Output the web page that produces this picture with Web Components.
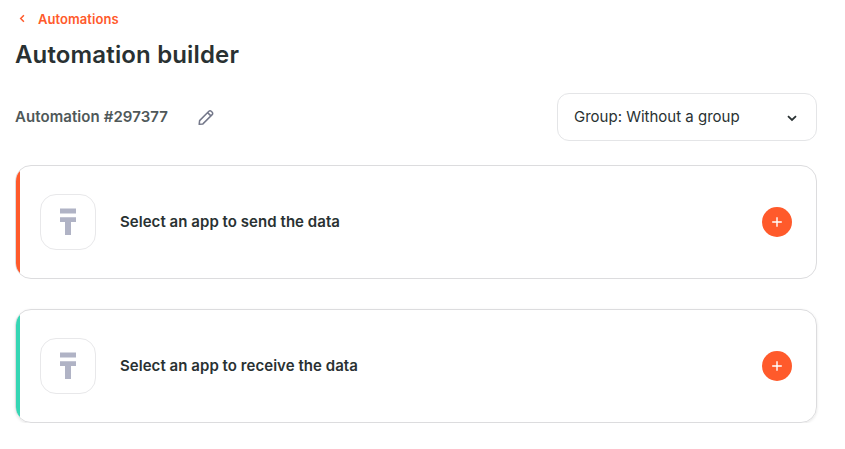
<!DOCTYPE html>
<html lang="en">
<head>
<meta charset="utf-8">
<title>Automation builder</title>
<style>
    body {
        margin: 0;
        background: #fff;
        color: #293132;
        font-family: Inter, "Liberation Sans", sans-serif;
        font-size: 15px;
    }
</style>
</head>
<body>
<automation-page>
    <back-link slot="back">Automations</back-link>
    <span slot="title">Automation builder</span>
    <automation-name slot="name">Automation #297377</automation-name>
    <group-select slot="group">Group: Without a group</group-select>
    <app-card color="#ff5a2b">Select an app to send the data</app-card>
    <app-card class="last" color="#35d6b4">Select an app to receive the data</app-card>
</automation-page>

<script>
class AutomationPage extends HTMLElement {
    constructor() {
        super();
        this.attachShadow({ mode: "open" });
        this.shadowRoot.innerHTML =
            `
            <style>
            :host{
                display: block;
                width: 802px;
                padding: 10px 0 0 15px;
            }
            h1{
                margin: 11px 0 0;
                font-size: 24px;
                line-height: 32px;
                font-weight: 600;
                letter-spacing: 0.15px;
            }
            .toolbar{
                display: flex;
                justify-content: space-between;
                align-items: center;
                margin: 22px 0 24px;
            }
            .cards{
                display: flex;
                flex-direction: column;
                gap: 30px;
            }
            </style>
            <slot name="back"></slot>
            <h1><slot name="title"></slot></h1>
            <div class="toolbar">
                <slot name="name"></slot>
                <slot name="group"></slot>
            </div>
            <div class="cards"><slot></slot></div>
            `
    }
}

class BackLink extends HTMLElement {
    constructor() {
        super();
        this.attachShadow({ mode: "open" });
        this.shadowRoot.innerHTML =
            `
            <style>
            :host{
                display: flex;
                align-items: center;
                gap: 9px;
                height: 18px;
                color: #ff5a2b;
                font-size: 13px;
                line-height: 18px;
                font-weight: 600;
                letter-spacing: 0.06px;
                cursor: pointer;
            }
            </style>
            <svg width="14" height="18" viewBox="0 0 14 18" fill="none" stroke="currentColor" stroke-width="1.5">
                <path d="M8.9 5.3 5.7 8.5l3.2 3.2"/>
            </svg>
            <span><slot></slot></span>
            `
    }
}

class AutomationName extends HTMLElement {
    constructor() {
        super();
        this.attachShadow({ mode: "open" });
        this.shadowRoot.innerHTML =
            `
            <style>
            :host{
                display: flex;
                align-items: center;
                gap: 30px;
                color: #4f5859;
                font-weight: 600;
                line-height: 20px;
                letter-spacing: 0.08px;
            }
            svg{
                display: block;
                color: #74788a;
            }
            </style>
            <span><slot></slot></span>
            <svg width="16" height="18" viewBox="0 0 16 18" fill="none" stroke="currentColor" stroke-width="1.5" stroke-linejoin="round">
                <path d="M1.2 16.3 1.6 12.6 10.9 3.3a1.6 1.6 0 0 1 2.3 0l1 1a1.6 1.6 0 0 1 0 2.3L4.9 15.9zM9.6 4.6l3.3 3.3"/>
            </svg>
            `
    }
}

class GroupSelect extends HTMLElement {
    constructor() {
        super();
        this.attachShadow({ mode: "open" });
        this.shadowRoot.innerHTML =
            `
            <style>
            :host{
                display: flex;
                box-sizing: border-box;
                justify-content: space-between;
                align-items: center;
                width: 260px;
                height: 48px;
                padding: 0 18px 0 16px;
                border: 1px solid #e4e5e7;
                border-radius: 12px;
                line-height: 20px;
                cursor: pointer;
            }
            </style>
            <span><slot></slot></span>
            <svg width="12" height="12" viewBox="0 0 12 12" fill="none" stroke="currentColor" stroke-width="1.8">
                <path d="M2 5.1l4 3.8 4-3.8"/>
            </svg>
            `
    }
}

class AppCard extends HTMLElement {
    constructor() {
        super();
        this.attachShadow({ mode: "open" });
        this.shadowRoot.innerHTML =
            `
            <style>
            :host{
                display: flex;
                box-sizing: border-box;
                height: 114px;
                overflow: hidden;
                align-items: center;
                border: 1px solid #dcdcde;
                border-radius: 16px;
            }
            :host(.last){
                box-shadow: 0 1px 3px rgba(0, 0, 0, 0.1);
            }
            .stripe{
                align-self: stretch;
                width: 4px;
                background: var(--stripe);
            }
            .tile{
                display: flex;
                box-sizing: border-box;
                justify-content: center;
                align-items: center;
                width: 56px;
                height: 56px;
                margin: 0 24px 0 20px;
                border: 1px solid #e8e8ea;
                border-radius: 16px;
            }
            .label{
                flex: 1;
                font-weight: 600;
                line-height: 20px;
                letter-spacing: 0.05px;
            }
            button{
                display: flex;
                justify-content: center;
                align-items: center;
                width: 30px;
                height: 30px;
                margin: 0 24px 0 0;
                padding: 0;
                border: none;
                border-radius: 50%;
                background: #ff5a2b;
                color: #fff;
                cursor: pointer;
            }
            </style>
            <div class="stripe"></div>
            <div class="tile">
                <svg width="16" height="28" viewBox="0 0 16 28" fill="#b0b3c5">
                    <path d="M0 .4h16v5.2H0zM0 9.2h16v4.8h-5v13H5V14H0z"/>
                </svg>
            </div>
            <div class="label"><slot></slot></div>
            <button aria-label="Add">
                <svg width="10" height="10" viewBox="0 0 10 10" stroke="currentColor" stroke-width="1.4">
                    <path d="M5 .2v9.6M.2 5h9.6"/>
                </svg>
            </button>
            `
    }

    connectedCallback() {
        this.style.setProperty("--stripe", this.getAttribute("color"));
    }
}

window.customElements.define("automation-page", AutomationPage)
window.customElements.define("back-link", BackLink)
window.customElements.define("automation-name", AutomationName)
window.customElements.define("group-select", GroupSelect)
window.customElements.define("app-card", AppCard)
</script>
</body>
</html>
